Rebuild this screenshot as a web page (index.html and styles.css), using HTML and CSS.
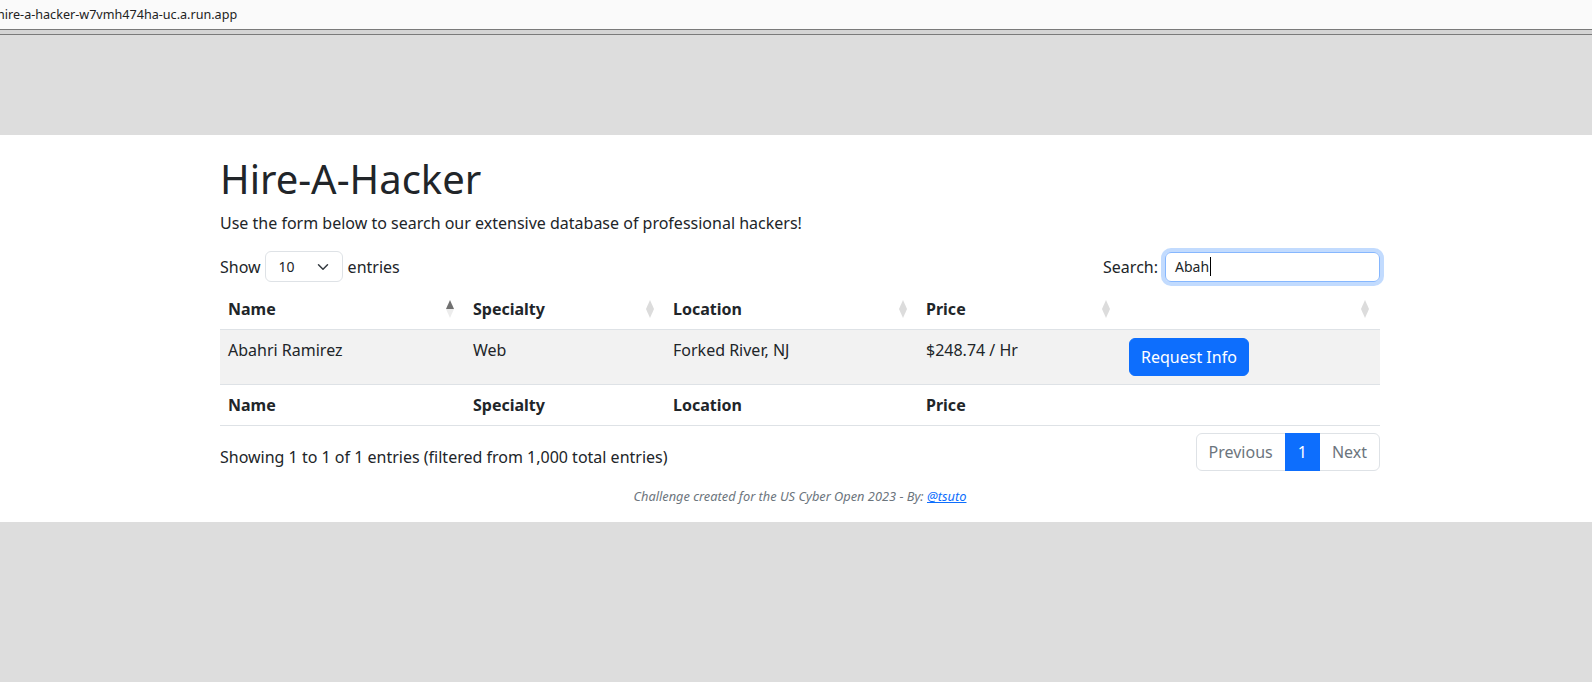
FILE: index.html
```html
<!DOCTYPE html>
<html lang="en">
<head>
<meta charset="utf-8">
<title>Hire-A-Hacker</title>
<link rel="stylesheet" href="styles.css">
</head>
<body>
<div class="urlbar"><span class="url">hire-a-hacker-w7vmh474ha-uc.a.run.app</span></div>
<div class="chrome-sep"></div>
<div class="gray-top"></div>
<main class="panel">
  <div class="container">
    <h1 class="title">Hire-A-Hacker</h1>
    <p class="lead">Use the form below to search our extensive database of professional hackers!</p>

    <div class="dt-top">
      <div class="length">
        <span>Show</span>
        <div class="select"><span class="sel-val">10</span>
          <svg class="chev" width="12" height="12" viewBox="0 0 16 16"><path d="M2 5l6 6 6-6" fill="none" stroke="#343a40" stroke-width="2" stroke-linecap="round" stroke-linejoin="round"/></svg>
        </div>
        <span>entries</span>
      </div>
      <div class="filter">
        <span>Search:</span>
        <div class="input focused"><span>Abah</span><span class="caret"></span></div>
      </div>
    </div>

    <table class="tbl">
      <colgroup>
        <col class="c1"><col class="c2"><col class="c3"><col class="c4"><col class="c5">
      </colgroup>
      <thead>
        <tr>
          <th class="sortable asc">Name<span class="sort"><i class="up"></i><i class="down"></i></span></th>
          <th class="sortable">Specialty<span class="sort"><i class="up"></i><i class="down"></i></span></th>
          <th class="sortable">Location<span class="sort"><i class="up"></i><i class="down"></i></span></th>
          <th class="sortable">Price<span class="sort"><i class="up"></i><i class="down"></i></span></th>
          <th class="sortable"><span class="sort"><i class="up"></i><i class="down"></i></span></th>
        </tr>
      </thead>
      <tbody>
        <tr class="odd">
          <td>Abahri Ramirez</td>
          <td>Web</td>
          <td>Forked River, NJ</td>
          <td>$248.74 / Hr</td>
          <td><button class="btn">Request Info</button></td>
        </tr>
      </tbody>
      <tfoot>
        <tr>
          <th>Name</th><th>Specialty</th><th>Location</th><th>Price</th><th></th>
        </tr>
      </tfoot>
    </table>

    <div class="dt-bottom">
      <div class="info">Showing 1 to 1 of 1 entries (filtered from 1,000 total entries)</div>
      <ul class="pagination">
        <li class="page prev">Previous</li>
        <li class="page active">1</li>
        <li class="page next">Next</li>
      </ul>
    </div>

    <p class="credit">Challenge created for the US Cyber Open 2023 - By: <a href="#">@tsuto</a></p>
  </div>
</main>
</body>
</html>
```

FILE: styles.css
```css
* { box-sizing: border-box; }
html, body { margin: 0; padding: 0; }
body {
  background: #dddddd;
  font-family: "Noto Sans", "Open Sans", sans-serif;
  color: #212529;
  font-size: 16px;
  line-height: 24px;
}
.urlbar {
  height: 29px;
  background: #fafafa;
  overflow: hidden;
  white-space: nowrap;
}
.url {
  display: block;
  margin-left: -3px;
  padding-top: 6px;
  font-size: 12.6px;
  line-height: 18px;
  color: #222;
}
.chrome-sep {
  height: 6px;
  background: #d4d4d4;
  border-top: 1px solid #7a7a7a;
  border-bottom: 1px solid #7a7a7a;
}
.gray-top { height: 100px; }
.panel {
  background: #fff;
  height: 387px;
  padding-top: 20px;
}
.container {
  width: 1160px;
  margin-left: 220px;
}
.title {
  margin: 0 0 8px;
  font-size: 40px;
  line-height: 48px;
  font-weight: 400;
}
.lead { margin: 0 0 16px; }
.dt-top {
  display: flex;
  justify-content: space-between;
  align-items: center;
  height: 31px;
}
.length, .filter {
  display: flex;
  align-items: center;
}
.select {
  display: flex;
  align-items: center;
  justify-content: space-between;
  width: 78px;
  height: 31px;
  margin: 0 5px 0 4px;
  padding: 0 13px 0 13px;
  border: 1px solid #dee2e6;
  border-radius: 6px;
  font-size: 14px;
}
.chev { display: block; }
.input {
  display: flex;
  align-items: center;
  width: 215px;
  height: 30px;
  margin-left: 7px;
  padding: 0 9px;
  border: 1px solid #86b7fe;
  border-radius: 6px;
  box-shadow: 0 0 0 4px rgba(13, 110, 253, 0.25);
  font-size: 14px;
}
.caret {
  display: inline-block;
  width: 1px;
  height: 19px;
  background: #000;
  margin-left: 1px;
}
.tbl {
  width: 1160px;
  margin-top: 6px;
  border-collapse: collapse;
  table-layout: fixed;
}
.c1 { width: 245px; }
.c2 { width: 200px; }
.c3 { width: 253px; }
.c4 { width: 203px; }
.c5 { width: 259px; }
.tbl th, .tbl td {
  padding: 8px;
  text-align: left;
  vertical-align: top;
  border-bottom: 1px solid #dee2e6;
}
.tbl th { font-weight: 700; }
.tbl thead th { position: relative; height: 41px; padding-top: 9px; }
.tbl tbody tr.odd td { background: #f2f2f2; }
.sort {
  position: absolute;
  right: 11px;
  top: 12px;
  width: 8px;
  height: 18px;
}
.sort i {
  position: absolute;
  left: 0;
  width: 0;
  height: 0;
  border-left: 4px solid transparent;
  border-right: 4px solid transparent;
}
.sort .up { top: 0; border-bottom: 9px solid #dcdcdc; }
.sort .down { top: 9px; border-top: 9px solid #dcdcdc; }
.asc .sort .up { border-bottom-color: #707070; }
.asc .sort .down { border-top-color: #ececec; }
.btn {
  display: inline-block;
  height: 38px;
  padding: 0 11px;
  font-family: inherit;
  font-size: 16px;
  line-height: 24px;
  color: #fff;
  background: #0d6efd;
  border: 1px solid #0d6efd;
  border-radius: 6px;
}
.dt-bottom {
  display: flex;
  justify-content: space-between;
  align-items: flex-start;
  margin-top: 7px;
}
.info { padding-top: 12px; }
.pagination {
  display: flex;
  margin: 0;
  padding: 0;
  list-style: none;
}
.page {
  height: 38px;
  padding: 6px 12px;
  border: 1px solid #dee2e6;
  color: #6c757d;
  margin-left: -1px;
}
.page.prev { border-radius: 6px 0 0 6px; }
.page.next { border-radius: 0 6px 6px 0; }
.page.active {
  background: #0d6efd;
  border-color: #0d6efd;
  color: #fff;
  position: relative;
}
.credit {
  margin: 16px 0 0;
  text-align: center;
  font-size: 12.8px;
  font-style: italic;
  color: #6c757d;
  line-height: 18px;
}
.credit a { color: #0d6efd; }
```
